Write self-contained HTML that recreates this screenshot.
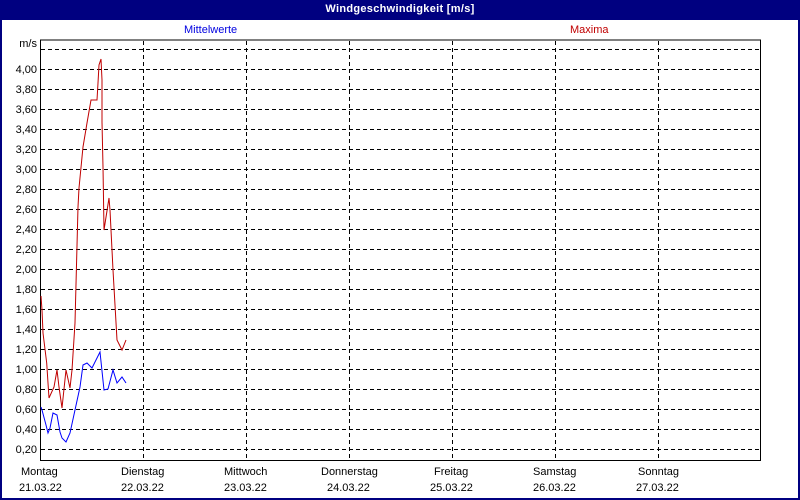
<!DOCTYPE html>
<html><head><style>
body{margin:0;width:800px;height:500px;overflow:hidden;background:#fff;font-family:"Liberation Sans",sans-serif;font-size:11px}
.t{position:absolute;white-space:nowrap}
</style></head><body>
<div style="position:absolute;left:0;top:0;width:796px;height:498px;border:2px solid #000080;border-top:none"></div>
<div style="position:absolute;left:0;top:0;width:800px;height:20px;background:#000080;color:#fff;font-weight:bold;text-align:center;line-height:18px;font-size:11px;letter-spacing:0.3px">Windgeschwindigkeit [m/s]</div>
<div class="t" style="left:184px;top:24px;color:#0000e0">Mittelwerte</div>
<div class="t" style="left:570px;top:24px;color:#c00000">Maxima</div>
<svg width="800" height="500" style="position:absolute;left:0;top:0">
<g stroke="#000" stroke-dasharray="4,3" stroke-width="1">
<path d="M41 49.5H760M41 69.5H760M41 89.5H760M41 109.5H760M41 129.5H760M41 149.5H760M41 169.5H760M41 189.5H760M41 209.5H760M41 229.5H760M41 249.5H760M41 269.5H760M41 289.5H760M41 309.5H760M41 329.5H760M41 349.5H760M41 369.5H760M41 389.5H760M41 409.5H760M41 429.5H760M41 449.5H760"/>
<path d="M143.5 41V460M246.5 41V460M349.5 41V460M452.5 41V460M555.5 41V460M658.5 41V460"/>
</g>
<path d="M40.5 40V460.5H760.5V40H40" fill="none" stroke="#000"/>
<polyline fill="none" stroke="#c00000" points="41,296 42,310 43,333 46.7,363 48,383 49,398 54,387 57,370 59,387 62,408 66,370 70,388 72,370 75,323 78,207 79,188 83,147 87,123 91,100 97,100 98,83 99,65 101,59 102,80 102,122 103,167 104,230 109,198 110,210 113,270 117,340 122,350 126,340"/>
<polyline fill="none" stroke="#0000ff" points="41,407 42,410 46,425 48,433 50,428 53,413 57,415 60,432 62,438 66,442 70,433 75,410 80,387 83,365 87,363 92,368 100,352 104,390 108,389 113,370 117,383 122,377 126,383"/>
</svg>
<div class="t" style="right:763px;top:38px">m/s</div>
<div style="position:absolute;left:0;top:60px;width:37px;text-align:right;line-height:20px">
4,00<br>3,80<br>3,60<br>3,40<br>3,20<br>3,00<br>2,80<br>2,60<br>2,40<br>2,20<br>2,00<br>1,80<br>1,60<br>1,40<br>1,20<br>1,00<br>0,80<br>0,60<br>0,40<br>0,20</div>
<div class="t" style="left:21px;top:466px">Montag</div><div class="t" style="left:19px;top:482px">21.03.22</div>
<div class="t" style="left:121px;top:466px">Dienstag</div><div class="t" style="left:121px;top:482px">22.03.22</div>
<div class="t" style="left:224px;top:466px">Mittwoch</div><div class="t" style="left:224px;top:482px">23.03.22</div>
<div class="t" style="left:321px;top:466px">Donnerstag</div><div class="t" style="left:327px;top:482px">24.03.22</div>
<div class="t" style="left:434px;top:466px">Freitag</div><div class="t" style="left:430px;top:482px">25.03.22</div>
<div class="t" style="left:533px;top:466px">Samstag</div><div class="t" style="left:533px;top:482px">26.03.22</div>
<div class="t" style="left:638px;top:466px">Sonntag</div><div class="t" style="left:636px;top:482px">27.03.22</div>
</body></html>
